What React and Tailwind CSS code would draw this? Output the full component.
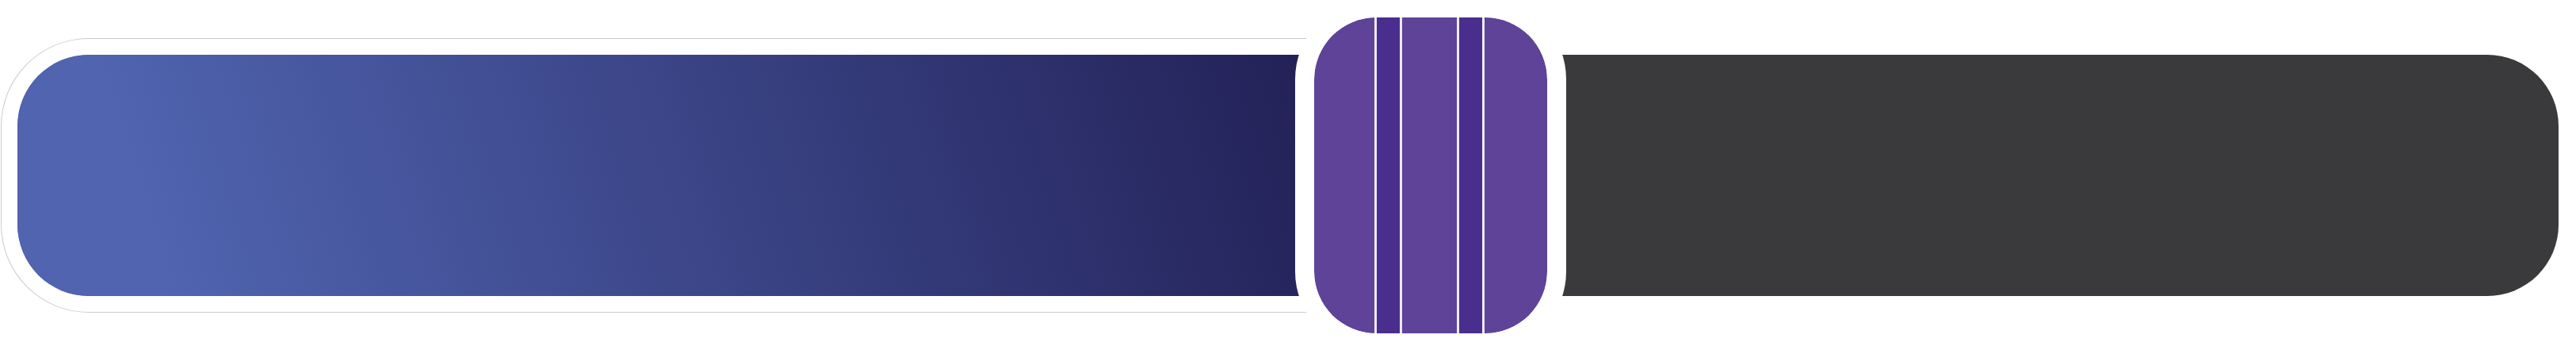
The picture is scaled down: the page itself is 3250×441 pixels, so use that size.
export default function App() {
    // stripes inside the slider thumb, left to right
    const stripes = [
        { w: 'w-[76px]', c: 'bg-[#5f4399]' },
        { w: 'w-[3px]', c: 'bg-[#efeaf6]' },
        { w: 'w-[29px]', c: 'bg-[#4a2e8e]' },
        { w: 'w-[3px]', c: 'bg-[#efeaf6]' },
        { w: 'w-[69px]', c: 'bg-[#5f4399]' },
        { w: 'w-[3px]', c: 'bg-[#efeaf6]' },
        { w: 'w-[29px]', c: 'bg-[#4a2e8e]' },
        { w: 'w-[3px]', c: 'bg-[#efeaf6]' },
        { w: 'flex-1', c: 'bg-[#5f4399]' },
    ];

    return (
        <div className="w-full h-[441px] bg-white flex items-center px-[22px] overflow-hidden">
            <div className="relative w-full h-[304px] rounded-[90px] bg-[#3a3a3c]">
                {/* filled part of the range */}
                <div className="absolute left-0 top-0 h-full w-[1783px] rounded-[90px] bg-[linear-gradient(72deg,#5064b0_10%,#1e1a4e_100%)] shadow-[0_0_0_20px_#ffffff,0_0_0_21px_#cccccc]"></div>

                {/* thumb */}
                <div className="absolute left-[1612px] top-1/2 -translate-y-1/2 w-[342px] h-[446px] rounded-[102px] border-[24px] border-white bg-white overflow-hidden">
                    <div className="flex h-full w-full rounded-[78px] overflow-hidden">
                        {stripes.map((s, i) => (
                            <div key={i} className={`${s.w} ${s.c} h-full`}></div>
                        ))}
                    </div>
                </div>
            </div>
        </div>
    );
}
